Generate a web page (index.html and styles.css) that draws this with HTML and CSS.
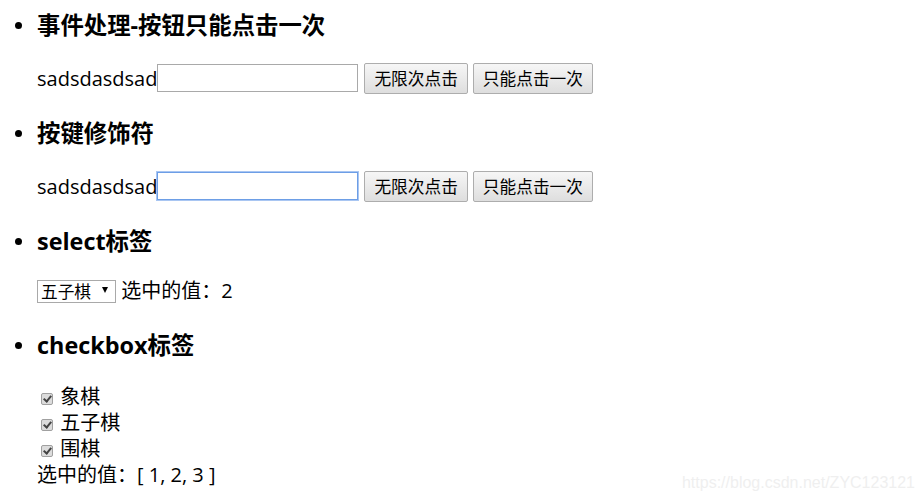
FILE: index.html
```html
<!DOCTYPE html>
<html lang="zh-CN">
<head>
    <meta charset="UTF-8">
    <title>事件处理</title>
    <link rel="stylesheet" href="styles.css">
</head>
<body>
    <ul class="demo-list">
        <li class="section">
            <h3>事件处理-按钮只能点击一次</h3>
            <div class="row">
                <span>sadsdasdsad</span><input type="text" class="text-input">
                <button class="btn">无限次点击</button>
                <button class="btn">只能点击一次</button>
            </div>
        </li>
        <li class="section">
            <h3>按键修饰符</h3>
            <div class="row">
                <span>sadsdasdsad</span><input type="text" class="text-input focused" autofocus>
                <button class="btn">无限次点击</button>
                <button class="btn">只能点击一次</button>
            </div>
        </li>
        <li class="section select-section">
            <h3>select标签</h3>
            <div class="line">
                <span class="select-wrap">
                    <select class="game-select">
                        <option value="1">象棋</option>
                        <option value="2" selected>五子棋</option>
                        <option value="3">围棋</option>
                    </select>
                </span>
                选中的值：2
            </div>
        </li>
        <li class="section checkbox-section">
            <h3>checkbox标签</h3>
            <div class="checks">
                <label class="line"><input type="checkbox" class="check" checked> 象棋</label>
                <label class="line"><input type="checkbox" class="check" checked> 五子棋</label>
                <label class="line"><input type="checkbox" class="check" checked> 围棋</label>
                <div class="line">选中的值：[ 1, 2, 3 ]</div>
            </div>
        </li>
    </ul>

    <div class="watermark">https://blog.csdn.net/ZYC123121</div>
</body>
</html>
```

FILE: styles.css
```css
body {
    margin: 0;
    font-family: "Open Sans", "Noto Sans CJK SC", sans-serif;
    font-size: 20px;
    color: #000;
    background-color: #fff;
}

.demo-list {
    margin: 0;
    padding: 10px 0 0 37px;
    list-style: none;
}

.section {
    position: relative;
    margin-bottom: 24px;
}

.section::before {
    content: "";
    position: absolute;
    left: -22px;
    top: 12px;
    width: 7px;
    height: 7px;
    border-radius: 50%;
    background-color: #000;
}

.select-section {
    margin-top: 1px;
}

.checkbox-section {
    margin-top: 26px;
}

h3 {
    margin: 0 0 22px;
    font-size: 23.4px;
    line-height: 30px;
    font-weight: bold;
}

.row {
    display: flex;
    align-items: center;
    height: 32px;
}

.text-input {
    box-sizing: border-box;
    width: 201px;
    height: 28px;
    margin: 0 6px 0 0;
    padding: 0 3px;
    border: 1px solid #a9a9a9;
    font-family: inherit;
    font-size: 16px;
    outline: none;
}

.text-input.focused {
    border-color: #6d9ee6;
    box-shadow: 0 0 0 1px #a9c6f2;
}

.btn {
    box-sizing: border-box;
    height: 31px;
    margin: 0 5px 0 0;
    padding: 0 9px;
    border: 1px solid #adadad;
    border-radius: 2px;
    background: linear-gradient(#f6f6f6, #dedede);
    font-family: "Noto Sans CJK SC", sans-serif;
    font-size: 16.7px;
    color: #000;
}

.line {
    display: block;
    height: 26px;
    line-height: 26px;
}

.select-wrap {
    position: relative;
    display: inline-block;
    vertical-align: top;
}

.select-wrap::after {
    content: "";
    position: absolute;
    right: 8px;
    top: 9px;
    border-left: 3.5px solid transparent;
    border-right: 3.5px solid transparent;
    border-top: 6px solid #000;
    pointer-events: none;
}

.game-select {
    box-sizing: border-box;
    width: 79px;
    height: 23px;
    padding: 0 0 0 3px;
    border: 1px solid #a9a9a9;
    border-radius: 0;
    background: #fff;
    appearance: none;
    -webkit-appearance: none;
    font-family: "Noto Sans CJK SC", sans-serif;
    font-size: 16.7px;
    line-height: 21px;
    color: #000;
}

.checks {
    padding-top: 2px;
}

.check {
    appearance: none;
    -webkit-appearance: none;
    position: relative;
    box-sizing: border-box;
    width: 12px;
    height: 12px;
    margin: 0 2px 0 4px;
    vertical-align: -1px;
    border: 1px solid #a0a0a0;
    border-radius: 2px;
    background: #dcdcdc;
}

.check:checked::after {
    content: "";
    position: absolute;
    left: 3px;
    top: 0px;
    width: 3px;
    height: 6px;
    border: solid #444;
    border-width: 0 2px 2px 0;
    transform: rotate(40deg);
}

.watermark {
    position: absolute;
    right: 8px;
    top: 474px;
    font-family: "Liberation Sans", Arial, sans-serif;
    font-size: 16px;
    color: #efefef;
}
```
